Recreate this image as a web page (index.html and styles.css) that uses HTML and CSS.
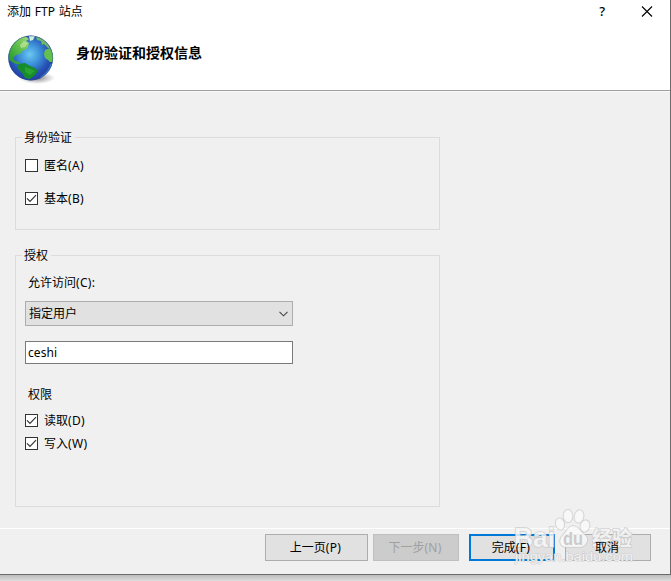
FILE: index.html
```html
<!DOCTYPE html>
<html lang="zh-CN">
<head>
<meta charset="utf-8">
<title>添加 FTP 站点</title>
<link rel="stylesheet" href="styles.css">
</head>
<body>
<div class="dialog">
  <header class="head">
    <div class="titlebar">
      <span class="title">添加 FTP 站点</span>
      <span class="help">?</span>
      <svg class="close" width="12" height="12" viewBox="0 0 12 12"><path d="M1 .5L11 10.500M11 .5L1 10.500" stroke="#000" stroke-width="1.1" fill="none"/></svg>
    </div>
    <div class="banner">
      <svg class="globe" width="48" height="50" viewBox="0 0 48 50">
        <defs>
          <radialGradient id="sea" cx="48%" cy="42%" r="62%">
            <stop offset="0" stop-color="#6cc8f0"/><stop offset=".35" stop-color="#3f93da"/><stop offset=".7" stop-color="#2552b4"/><stop offset="1" stop-color="#24379a"/>
          </radialGradient>
          <linearGradient id="land" x1="0" y1="1" x2="1" y2="0"><stop offset="0" stop-color="#1f8f2d"/><stop offset=".5" stop-color="#58bb48"/><stop offset="1" stop-color="#a5dc7c"/></linearGradient>
          <radialGradient id="shade"><stop offset="0" stop-color="#555" stop-opacity=".75"/><stop offset="1" stop-color="#777" stop-opacity="0"/></radialGradient>
          <clipPath id="ball"><circle cx="22.7" cy="23" r="22.4"/></clipPath>
          <filter id="soft"><feGaussianBlur stdDeviation=".45"/></filter>
        </defs>
        <ellipse cx="29" cy="43" rx="18" ry="6" fill="url(#shade)"/>
        <circle cx="22.7" cy="23" r="22.4" fill="url(#sea)"/>
        <g clip-path="url(#ball)"><g filter="url(#soft)">
          <path d="M0 20L3 11L9 4L17 1L21 4L18 6L21 8L20 12L17 15L14 16L12 19L8 20L5 23L7 26L11 27L12 29L8 29L4 27L1 25Z" fill="url(#land)"/>
          <path d="M12 10L16 6L20 8L17 12L13 13Z" fill="#c2e79c" opacity=".7"/>
          <path d="M21 1L27 1L25 5L22 6Z" fill="#d5edda"/>
          <path d="M28 2L34 3L39 8L42 13L40 13L36 9L34 10L33 6L29 5Z" fill="#6dbb68"/>
          <path d="M37 15L42 13L46 20L46 27L42 27L40 25L37 23L36 19Z" fill="#63c04d"/>
          <path d="M11 29L17 28L22 31L27 33L30 36L27 40L22 44L17 43L15 39L11 35L9 32Z" fill="#138d2c"/>
          <path d="M17 32L23 34L27 36L22 40L17 37Z" fill="#35ac33" opacity=".7"/>
          <path d="M33 43Q42 37 44 29" fill="none" stroke="#4fb0e6" stroke-width="3" opacity=".5"/>
        </g></g>
        <circle cx="22.7" cy="23" r="22" fill="none" stroke="#2a4f91" stroke-width=".8" opacity=".55"/>
      </svg>
      <h1 class="heading">身份验证和授权信息</h1>
    </div>
  </header>

  <main class="content">
    <fieldset class="group auth">
      <legend>身份验证</legend>
      <div class="check"><span class="box"></span><span>匿名<span class="key">(A)</span></span></div>
      <div class="check"><span class="box"><svg width="11" height="11" viewBox="0 0 11 11"><path d="M1 5.3L4 8.3L10 2.2"/></svg></span><span>基本<span class="key">(B)</span></span></div>
    </fieldset>
    <fieldset class="group access">
      <legend>授权</legend>
      <div class="label">允许访问<span class="key">(C):</span></div>
      <div class="select"><span>指定用户</span><svg width="9" height="6" viewBox="0 0 9 6"><path d="M.5 .8L4.5 4.8L8.5 .8" fill="none" stroke="#444" stroke-width="1.1"/></svg></div>
      <div class="input">ceshi</div>
      <div class="label rights">权限</div>
      <div class="check"><span class="box"><svg width="11" height="11" viewBox="0 0 11 11"><path d="M1 5.3L4 8.3L10 2.2"/></svg></span><span>读取<span class="key">(D)</span></span></div>
      <div class="check"><span class="box"><svg width="11" height="11" viewBox="0 0 11 11"><path d="M1 5.3L4 8.3L10 2.2"/></svg></span><span>写入<span class="key">(W)</span></span></div>
    </fieldset>
  </main>

  <footer class="actions">
    <div class="btn wide"><span>上一页<span class="key">(P)</span></span></div>
    <div class="btn disabled"><span>下一步<span class="key">(N)</span></span></div>
    <div class="btn primary"><span>完成<span class="key">(F)</span></span></div>
    <div class="btn"><span>取消</span></div>
  </footer>
</div>
<svg class="watermark" width="130" height="64" viewBox="0 0 130 64">
  <g class="mark">
    <ellipse cx="47" cy="17" rx="4.2" ry="5.8" transform="rotate(-12 47 17)"/>
    <ellipse cx="55" cy="9" rx="4.5" ry="6.3"/>
    <ellipse cx="66" cy="9.500" rx="4.5" ry="6.300" transform="rotate(12 66 9.500)"/>
    <ellipse cx="72" cy="19" rx="4.500" ry="5.800" transform="rotate(15 72 19)"/>
    <path d="M60 19C65 19 67 24 72 28C77 32 73 40 67 40H53C47 40 45 33 50 28C54 24 55 19 60 19Z"/>
    <text x="1" y="40" class="bai" textLength="41" lengthAdjust="spacingAndGlyphs">Bai</text>
    <text x="79" y="39" class="jing" textLength="40">经验</text>
    <text x="2" y="54" class="url" textLength="118" lengthAdjust="spacingAndGlyphs">jingyan.baidu.com</text>
  </g>
  <text x="50" y="38" class="du" textLength="20" lengthAdjust="spacingAndGlyphs">du</text>
</svg>
</body>
</html>
```
FILE: styles.css
```css
* { box-sizing: border-box; }
body {
  margin: 0;
  width: 671px;
  height: 581px;
  overflow: hidden;
  position: relative;
  background: linear-gradient(#bcbcbc 575px, #dedede 581px);
  font: 12px/16px "Noto Sans", "Noto Sans CJK SC", sans-serif;
  color: #000;
}
.dialog {
  width: 671px;
  height: 575px;
  display: flex;
  flex-direction: column;
  background: #f0f0f0;
  border-right: 1px solid #6b6b6b;
  border-bottom: 1px solid #6b6b6b;
}
.head { height: 92px; background: #fff; border-bottom: 1px solid #f8f8f8; box-shadow: inset 0 -1px #a0a0a0; }
.titlebar { height: 24px; display: flex; align-items: center; padding: 0 17px 0 7px; }
.title { flex: 1; word-spacing: .7px; }
.help { font-size: 13px; font-weight: 500; margin: -2px 36px 0 0; }
.close { margin-top: -1px; }
.banner { display: flex; gap: 20px; padding: 11px 0 0 8px; }
.heading { margin: 9px 0 0; font-size: 14px; line-height: 18px; font-weight: 700; }
.content { height: 436px; padding: 37px 0 0 15px; }
.group {
  width: 425px;
  margin: 0;
  padding: 0 9px;
  border: 1px solid #dcdcdc;
  min-width: 0;
}
.group legend { height: 17px; line-height: 18px; margin-left: -3px; padding: 0 3px 0 2px; }
.auth { height: 101px; }
.access { height: 260px; margin-top: 17px; }
.check { display: flex; align-items: flex-start; gap: 6px; height: 16px; }
.auth .check { margin-top: 12px; }
.auth .check + .check { margin-top: 17px; }
.box { width: 13px; height: 13px; margin-top: 1px; border: 1px solid #333; background: #fff; display: flex; }
.box path { fill: none; stroke: #333; stroke-width: 1.2; }
.key { letter-spacing: .3px; }
.label { margin: 11px 0 0 3px; height: 16px; }
.select {
  width: 268px;
  height: 25px;
  margin-top: 10px;
  padding: 0 4px 0 3px;
  border: 1px solid #adadad;
  background: #e1e1e1;
  display: flex;
  align-items: center;
  justify-content: space-between;
}
.input { width: 268px; height: 23px; margin-top: 15px; padding: 3px 2px; border: 1px solid #7a7a7a; background: #fff; letter-spacing: .1px; }
.rights { margin: 23px 0 10px 3px; }
.access .check + .check { margin-top: 7px; }
.actions { height: 46px; border-top: 1px solid #fff; padding: 5px 19px 0 0; display: flex; justify-content: flex-end; }
.btn { width: 86px; height: 27px; border: 1px solid #adadad; background: #e1e1e1; display: flex; align-items: center; justify-content: center; margin-left: 10px; }
.btn > span { margin-right: 2px; position: relative; z-index: 2; }
.btn.wide { width: 103px; }
.btn.disabled { margin-left: 5px; background: #ccc; border-color: #bfbfbf; color: #a0a0a0; }
.btn.primary { border: 2px solid #0078d7; }
.watermark { position: absolute; z-index: 1; left: 513px; top: 507px; font-family: "Liberation Sans", "Noto Sans CJK SC", sans-serif; font-weight: 700; }
.mark { fill: #fafafa; fill-opacity: .8; stroke: #c8c8c8; stroke-opacity: .8; stroke-width: 1.6; paint-order: stroke; }
.bai { font-size: 28px; }
.jing { font-size: 20px; font-weight: 700; }
.url { font-size: 13px; font-weight: 400; stroke-width: 1; }
.du { font-size: 19px; fill: #cbcbcb; }
```
